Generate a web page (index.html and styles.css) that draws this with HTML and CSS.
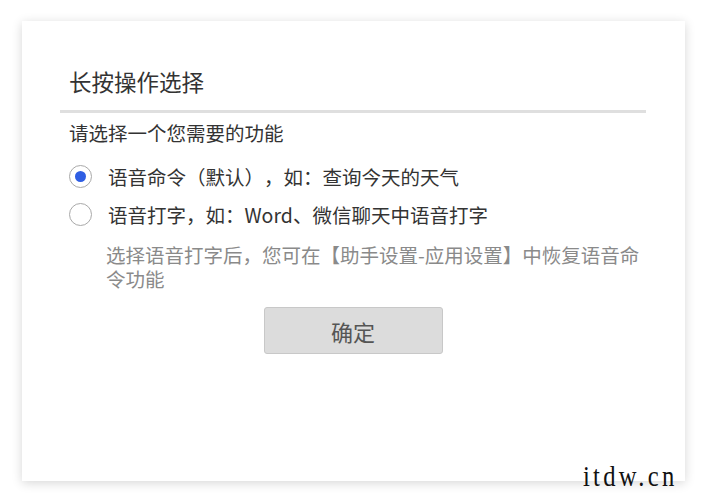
FILE: index.html
```html
<!DOCTYPE html>
<html lang="zh-CN">
<head>
<meta charset="utf-8">
<link rel="stylesheet" href="styles.css">
</head>
<body>
<div class="card">
  <div class="title">长按操作选择</div>
  <div class="divider"></div>
  <div class="subtitle">请选择一个您需要的功能</div>
  <div class="option">
    <span class="radio checked"></span>
    <span class="label">语音命令（默认），如：查询今天的天气</span>
  </div>
  <div class="option">
    <span class="radio"></span>
    <span class="label">语音打字，如：Word、微信聊天中语音打字</span>
  </div>
  <div class="hint">选择语音打字后，您可在【助手设置-应用设置】中恢复语音命令功能</div>
  <div class="actions"><button class="btn">确定</button></div>
</div>
<div class="watermark">itdw.cn</div>
</body>
</html>
```
FILE: styles.css
```css
html, body {
  margin: 0;
  padding: 0;
  background: #ffffff;
  font-family: "Noto Sans CJK SC", "Noto Sans", sans-serif;
  text-spacing-trim: space-all;
}
body {
  padding: 21px 20px 20px 22px;
  position: relative;
  height: 501px;
  box-sizing: border-box;
}
.card {
  width: 663px;
  height: 460px;
  box-sizing: border-box;
  background: #fff;
  box-shadow: 0 2px 10px rgba(0, 0, 0, 0.16);
  padding: 45px 39px 0 38px;
}
.title {
  font-size: 22.5px;
  line-height: 30px;
  color: #333;
  padding-left: 9px;
  margin-bottom: 14px;
}
.divider {
  height: 3px;
  background: #dfdfdf;
}
.subtitle {
  margin-top: 8px;
  padding-left: 9px;
  font-size: 19.5px;
  line-height: 24px;
  color: #333;
}
.option {
  display: flex;
  align-items: center;
  height: 38px;
  padding-left: 9px;
  font-size: 19.5px;
  color: #333;
}
.subtitle + .option {
  margin-top: 12px;
}
.radio {
  width: 23px;
  height: 23px;
  box-sizing: border-box;
  border: 1.5px solid #a9a9a9;
  border-radius: 50%;
  margin-right: 16px;
  display: flex;
  align-items: center;
  justify-content: center;
  flex: none;
}
.radio.checked::after {
  content: "";
  width: 11px;
  height: 11px;
  border-radius: 50%;
  background: #2f5ee3;
}
.hint {
  margin-top: 10px;
  padding-left: 46px;
  font-size: 19.5px;
  line-height: 24px;
  color: #8a8a8a;
}
.actions {
  display: flex;
  justify-content: center;
  margin-top: 16px;
}
.btn {
  width: 179px;
  height: 47px;
  background: #dcdcdc;
  border: 1px solid #c8c8c8;
  border-radius: 3px;
  font-family: inherit;
  font-size: 22px;
  color: #555;
  padding: 0;
}
.watermark {
  position: absolute;
  left: 583px;
  top: 459px;
  font-family: "Liberation Serif", serif;
  font-size: 30px;
  line-height: 34px;
  color: #111;
  letter-spacing: 4px;
  white-space: nowrap;
  transform: scaleX(0.82);
  transform-origin: left;
}
```
